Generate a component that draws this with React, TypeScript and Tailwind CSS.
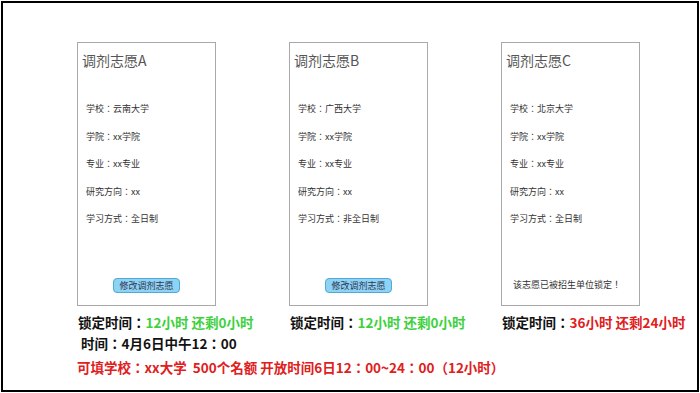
const FONT = { fontFamily: '"Noto Sans CJK TC", "Noto Sans CJK SC", "Noto Sans", sans-serif' };

interface Wish {
  id: string;
  school: string;
  mode: string;
  editable: boolean;
  lock: string;
  left: string;
  red: boolean;
}

const WISHES: Wish[] = [
  { id: 'A', school: '云南大学', mode: '全日制', editable: true, lock: '12小时', left: '还剩0小时', red: false },
  { id: 'B', school: '广西大学', mode: '非全日制', editable: true, lock: '12小时', left: '还剩0小时', red: false },
  { id: 'C', school: '北京大学', mode: '全日制', editable: false, lock: '36小时', left: '还剩24小时', red: true },
];

function WishCard({ wish }: { wish: Wish }) {
  const rows = [
    `学校：${wish.school}`,
    '学院：xx学院',
    '专业：xx专业',
    '研究方向：xx',
    `学习方式：${wish.mode}`,
  ];
  return (
    <div className="flex h-[264px] w-[139px] flex-col border border-[#a9a9a9] bg-white">
      <div className="px-[4px] pt-[7px] text-[14px] leading-[20px] text-[#555]">调剂志愿{wish.id}</div>
      <div className="mt-[25px] flex flex-col pl-[8px]">
        {rows.map((r) => (
          <div key={r} className="text-[9px] leading-[27.5px] text-[#333]">{r}</div>
        ))}
      </div>
      {wish.editable ? (
        <div className="mt-auto mb-[12px] self-center rounded-[4px] border border-[#4fa9d9] bg-[#8dd3f3] px-[5px] text-[9px] leading-[13px] text-[#335]">
          修改调剂志愿
        </div>
      ) : (
        <div className="mt-auto mb-[14px] pl-[11px] text-[9px] leading-[12px] text-[#333]">该志愿已被招生单位锁定！</div>
      )}
    </div>
  );
}

export default function App() {
  return (
    <div className="h-[393px] w-[700px] bg-white" style={FONT}>
      <div className="ml-[1px] mt-[1px] h-[391px] w-[698px] border-2 border-black pl-[74px] pt-[39px]">
        <div className="flex gap-[73px]">
          {WISHES.map((w) => (
            <div key={w.id} className="flex w-[139px] flex-col">
              <WishCard wish={w} />
              <div className="mt-[7px] whitespace-nowrap pl-[1px] text-[13.5px] font-bold leading-[18px] text-[#111]">
                锁定时间：
                <span className={w.red ? 'text-[#e0201c]' : 'text-[#3dd13d]'}>
                  {w.lock} {w.left}
                </span>
              </div>
            </div>
          ))}
        </div>
        <div className="mt-[3px] pl-[4px] text-[13.5px] font-bold leading-[18px] text-[#111]">时间：4月6日中午12：00</div>
        <div className="mt-[6px] whitespace-nowrap text-[13.5px] font-bold leading-[18px] text-[#e0201c]">
          可填学校：xx大学&nbsp;&nbsp;500个名额 开放时间6日12：00~24：00（12小时）
        </div>
      </div>
    </div>
  );
}
